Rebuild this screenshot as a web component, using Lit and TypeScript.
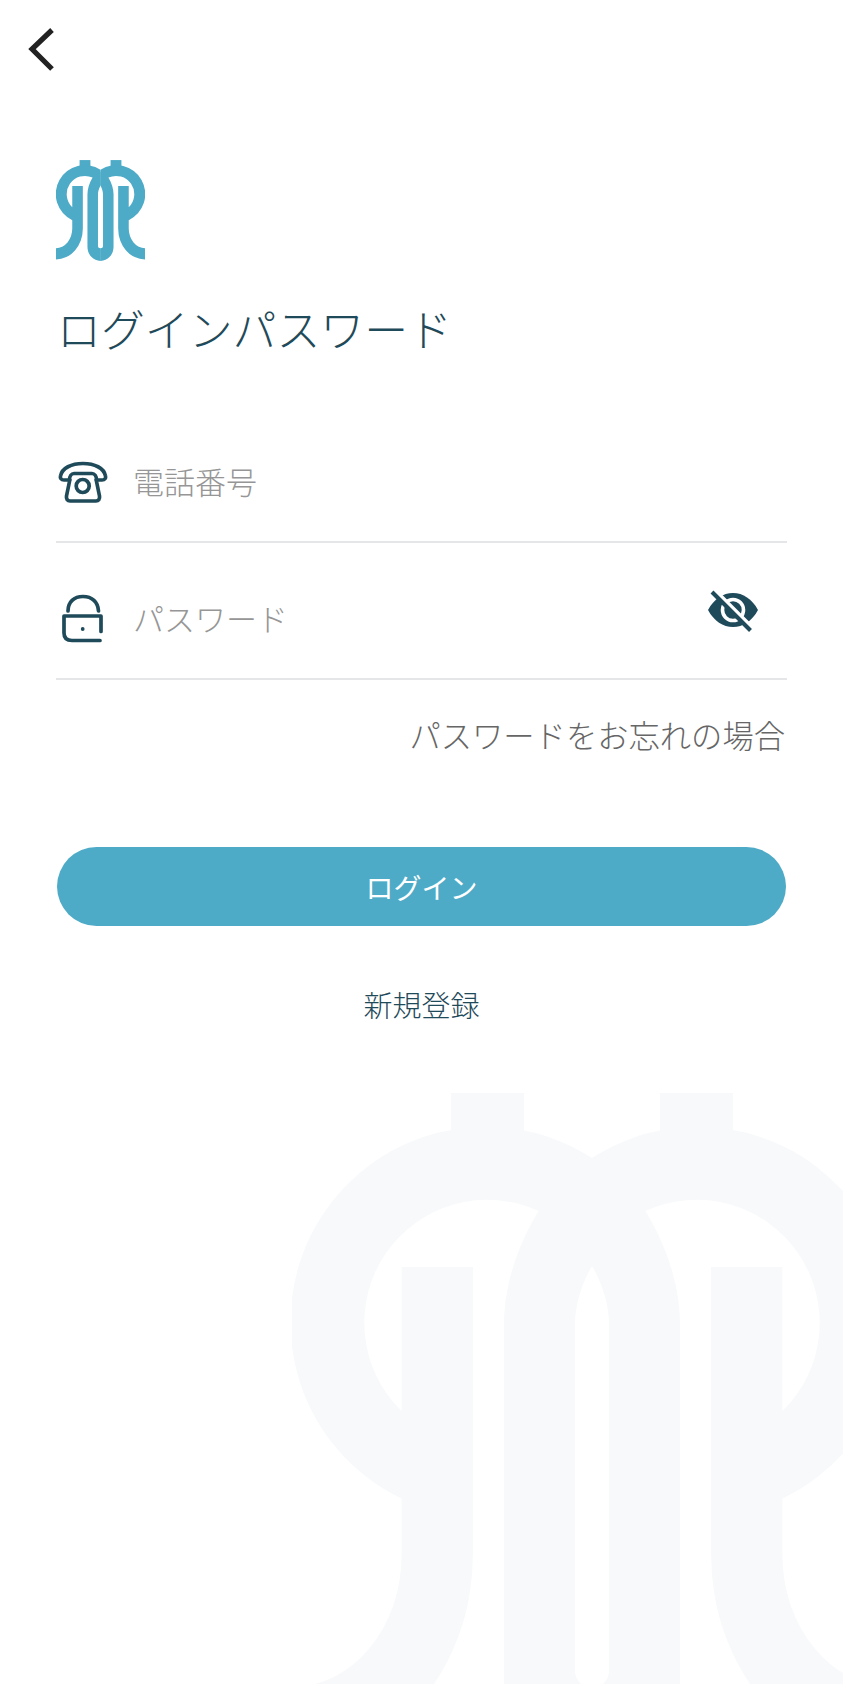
import { LitElement, html, css, svg } from "lit";
import { customElement } from "lit/decorators.js";

const half = "M300 65 A195.5 195.5 0 1 0 109.6 405.6 L109.6 462 A109.6 132 0 0 1 0 594 L0 670 A180.9 208 0 0 0 180.9 462 L180.9 174 L109.6 174 L109.6 318 A123 123 0 0 1 246.6 118 C224 155 212 195 212 231 L212 585 A88 95 0 0 0 300 680 L300 595 A17 17 0 0 1 283 578 L283 231 C283 212 290 190 300 173 Z";

const logoShape = svg`
  <g>
    <path d=${half}/>
    <rect x="159" y="0" width="73" height="50"/>
    <g transform="translate(600 0) scale(-1 1)">
      <path d=${half}/>
      <rect x="159" y="0" width="73" height="50"/>
    </g>
    <rect x="298" y="80" width="4" height="88"/>
    <rect x="298" y="597" width="4" height="82"/>
  </g>
`;

@customElement("app-root")
export class AppRoot extends LitElement {
  static styles = css`
    :host {
      display: block;
      position: relative;
      height: 1684px;
      overflow: hidden;
      background: #fff;
      font-family: "Noto Sans CJK JP", "Noto Sans", sans-serif;
      color: #1f4a5a;
    }
    .watermark {
      position: absolute;
      left: 292px;
      top: 1093px;
      width: 600px;
      height: 680px;
      fill: #f8f9fb;
    }
    .content {
      position: relative;
      display: flex;
      flex-direction: column;
      padding: 0 56px;
    }
    .back {
      display: block;
      margin: 24px 0 0 -32px;
      width: 32px;
      height: 50px;
      fill: none;
      stroke: #222;
      stroke-width: 5.2;
    }
    .logo {
      display: block;
      margin-top: 86px;
      width: 89px;
      height: 101px;
      fill: #4eabc7;
    }
    h1 {
      margin: 37px 0 2px 1px;
      font-size: 43.9px;
      line-height: 60px;
      font-weight: 300;
      color: #1f4a5a;
    }
    .fields {
      margin-top: 46px;
      display: flex;
      flex-direction: column;
    }
    .field {
      height: 135px;
      box-sizing: content-box;
      border-bottom: 2px solid #e4e6e7;
      display: flex;
      align-items: flex-end;
      gap: 23px;
    }
    .icon {
      flex: none;
      width: 54px;
      height: 54px;
      margin-bottom: 32px;
      fill: none;
      stroke: #1f4a5a;
      stroke-width: 3.7;
      stroke-linejoin: round;
    }
    .placeholder {
      flex: 1;
      font-size: 31px;
      font-weight: 300;
      line-height: 40px;
      margin-bottom: 40px;
      color: #969696;
    }
    .eye {
      flex: none;
      width: 54px;
      height: 54px;
      margin: 0 27px 41px 0;
    }
    .forgot {
      margin: 35px 2px 2px 0;
      text-align: right;
      font-size: 31.3px;
      font-weight: 300;
      line-height: 40px;
      color: #666;
    }
    .login {
      margin: 90px 1px 0;
      height: 79px;
      border-radius: 40px;
      background: #4eabc7;
      color: #fff;
      display: flex;
      align-items: center;
      justify-content: center;
      font-size: 28px;
    }
    .register {
      margin-top: 58px;
      text-align: center;
      font-size: 29px;
      font-weight: 300;
      line-height: 40px;
      color: #1f4a5a;
    }
  `;

  render() {
    return html`
      <svg class="watermark" viewBox="0 0 600 680">${logoShape}</svg>
      <div class="content">
        <svg class="back" viewBox="0 0 32 50">
          <path d="M28 6 L8 25 L28 45" />
        </svg>
        <svg class="logo" viewBox="0 0 600 680">${logoShape}</svg>
        <h1>ログインパスワード</h1>
        <div class="fields">
          <div class="field">
            <svg class="icon" viewBox="0 0 54 54">
              <path d="M13.5 25 H8 C5 25 4 23 4.5 21 C6 13 15.5 8.5 27 8.5 C38.5 8.5 48 13 49.5 21 C50 23 49 25 46 25 H40.5 C40.5 21 38.5 18.5 36 18.5 H18 C15.5 18.5 13.5 21 13.5 25 Z" />
              <path d="M14 24 L10.5 41 C10 44 11.5 46 14 46 H40 C42.5 46 44 44 43.5 41 L40 24" />
              <circle cx="26.7" cy="31" r="6.5" />
            </svg>
            <div class="placeholder">電話番号</div>
          </div>
          <div class="field">
            <svg class="icon" viewBox="0 0 54 54">
              <path d="M12 19 C12 10 18 4.5 27 4.5 C36 4.5 42 10 42.5 19" stroke-linecap="round" />
              <path d="M45 39.5 V24 H8 V41 C8 46 11 48.5 16 48.5 H44" stroke-linecap="round" />
              <circle cx="26.7" cy="37" r="1.9" fill="#1f4a5a" stroke="none" />
            </svg>
            <div class="placeholder">パスワード</div>
            <svg class="eye" viewBox="0 0 54 54">
              <path d="M2 27 C8 16 17 10 27 10 C37 10 46 16 52 27 C46 38 37 44 27 44 C17 44 8 38 2 27 Z" fill="#1f4a5a" />
              <circle cx="27" cy="27" r="10.5" fill="none" stroke="#fff" stroke-width="3.6" />
              <circle cx="27" cy="27" r="6.5" fill="#1f4a5a" />
              <path d="M8.5 7 L46.5 45" stroke="#fff" stroke-width="4" fill="none" />
              <path d="M6 9 L44.5 47.5" stroke="#1f4a5a" stroke-width="4" fill="none" />
            </svg>
          </div>
        </div>
        <div class="forgot">パスワードをお忘れの場合</div>
        <div class="login">ログイン</div>
        <div class="register">新規登録</div>
      </div>
    `;
  }
}
